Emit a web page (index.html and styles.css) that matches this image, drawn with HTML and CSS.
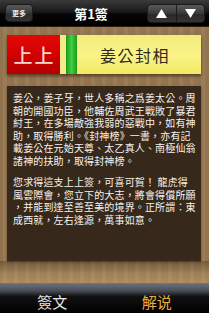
FILE: index.html
```html
<!DOCTYPE html>
<html>
<head>
<meta charset="utf-8">
<link rel="stylesheet" href="styles.css">
</head>
<body>
<div class="app">
  <div class="topbar">
    <div class="more">更多</div>
    <div class="title">第1簽</div>
    <div class="arrows">
      <div class="arrow"><svg width="11" height="9" viewBox="0 0 11 9"><polygon points="5.5,0 11,9 0,9" fill="#fff"/></svg></div>
      <div class="arrow"><svg width="11" height="9" viewBox="0 0 11 9"><polygon points="0,0 11,0 5.5,9" fill="#fff"/></svg></div>
    </div>
  </div>
  <div class="main">
    <div class="header">
      <div class="rank">上上</div>
      <div class="stripe-y"></div>
      <div class="stripe-g"></div>
      <div class="name">姜公封相</div>
    </div>
    <div class="textbox">
      <p>姜公，姜子牙，世人多稱之爲姜太公。周<br>朝的開國功臣，他輔佐周武王戰敗了暴君<br>紂王，在多場敵強我弱的惡戰中，如有神<br>助，取得勝利。《封神榜》一書，亦有記<br>載姜公在元始天尊、太乙真人、南極仙翁<br>諸神的扶助，取得封神榜。</p>
      <p>您求得這支上上簽，可喜可賀！ 龍虎得<br>風雲際會，您立下的大志，將會得償所願<br>，并能到達至善至美的境界。正所謂：東<br>成西就，左右逢源，萬事如意。</p>
    </div>
    <div class="woodfoot"></div>
  </div>
  <div class="tabbar">
    <div class="tab">簽文</div>
    <div class="tab active">解说</div>
  </div>
</div>
</body>
</html>
```
FILE: styles.css
```css
html, body {
  margin: 0;
  padding: 0;
}
body {
  width: 209px;
  height: 313px;
  overflow: hidden;
  font-family: "Noto Sans CJK TC", "Noto Sans CJK SC", sans-serif;
}
.app {
  width: 209px;
  height: 313px;
  display: flex;
  flex-direction: column;
  background-color: #977852;
  background-image:
    repeating-linear-gradient(90deg, rgba(0,0,0,0.04) 0 3px, rgba(255,255,255,0.03) 3px 7px, rgba(0,0,0,0.03) 7px 11px);
}
.topbar {
  height: 27px;
  flex: none;
  display: flex;
  align-items: center;
  padding: 0 4px 0 5px;
  background: linear-gradient(#3a3a3a, #1a1a1a 45%, #050505 55%, #000);
  border-bottom: 1px solid #2a1e12;
  box-sizing: border-box;
}
.more {
  width: 28px;
  height: 18px;
  box-sizing: border-box;
  border-radius: 4px;
  border: 1px solid #1a1a1a;
  background: linear-gradient(#5a5a5a, #3a3a3a 50%, #2c2c2c 55%, #333);
  color: #e8e8e8;
  font-size: 7px;
  font-weight: bold;
  display: flex;
  align-items: center;
  justify-content: center;
}
.title {
  flex: 1;
  text-align: center;
  color: #fff;
  font-size: 13px;
  font-weight: bold;
  padding-left: 2px;
}
.arrows {
  width: 58px;
  height: 19px;
  display: flex;
  border-radius: 4px;
  border: 1px solid #1a1a1a;
  box-sizing: border-box;
  overflow: hidden;
  background: linear-gradient(#5a5a5a, #3a3a3a 50%, #2a2a2a 55%, #333);
}
.arrow {
  flex: 1;
  display: flex;
  align-items: center;
  justify-content: center;
}
.arrow + .arrow {
  border-left: 1px solid #1c1c1c;
}
.main {
  flex: 1;
  display: flex;
  flex-direction: column;
  padding: 8px 8px 0 7px;
}
.header {
  height: 39px;
  flex: none;
  display: flex;
  box-shadow: 0 2px 3px rgba(40,20,0,0.6);
}
.rank {
  width: 53px;
  background: linear-gradient(#e40808, #cc0000 60%, #b40000);
  color: #f6d4d4;
  font-size: 19px;
  font-weight: 500;
  letter-spacing: 2px;
  padding-left: 2px;
  box-sizing: border-box;
  display: flex;
  align-items: center;
  justify-content: center;
}
.stripe-y {
  width: 6px;
  background: #f4ea88;
}
.stripe-g {
  width: 11px;
  background: linear-gradient(90deg, #1a9a1a, #3ed03e 50%, #1a9a1a);
}
.name {
  flex: 1;
  background: linear-gradient(#f2ea7a, #faf388 50%, #f2e864);
  color: #2e2a20;
  font-size: 16px;
  letter-spacing: 1.5px;
  display: flex;
  align-items: center;
  justify-content: center;
  padding-right: 8px;
}
.textbox {
  margin-top: 12px;
  height: 175px;
  flex: none;
  box-sizing: border-box;
  background: #36281b;
  padding: 6px 0 0 6px;
  color: #f6f2ec;
  font-size: 10px;
  line-height: 12.5px;
  letter-spacing: 0.15px;
  white-space: nowrap;
  overflow: hidden;
  box-shadow: 0 1px 2px rgba(30,15,0,0.5);
}
.textbox p {
  margin: 0 0 9px 0;
}
.woodfoot {
  flex: 1;
  margin: 0 -8px 0 -7px;
  background: linear-gradient(rgba(40,25,10,0.3), rgba(255,220,160,0.12) 60%, rgba(255,220,160,0.22));
}
.tabbar {
  height: 30px;
  flex: none;
  display: flex;
  background: linear-gradient(#6e7480, #4a4e58 25%, #111 45%, #000);
}
.tab {
  flex: 1;
  display: flex;
  align-items: center;
  justify-content: center;
  color: #e6e6e6;
  font-size: 15px;
  padding-top: 7px;
  box-sizing: border-box;
}
.tab.active {
  color: #e8b03a;
}
```
